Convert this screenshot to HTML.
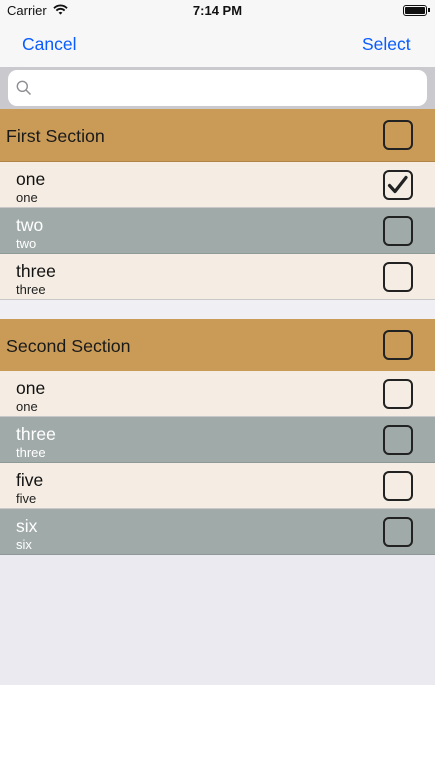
<!DOCTYPE html>
<html><head><meta charset="utf-8"><style>
*{margin:0;padding:0;box-sizing:border-box}
body{width:435px;height:773px;background:#fff;font-family:"Liberation Sans",sans-serif;position:relative;overflow:hidden}
.abs{position:absolute}
.bar{left:0;top:0;width:435px;height:67px;background:#f7f7f7}
.search{left:0;top:67px;width:435px;height:42px;background:#c9c9ce}
.field{left:8px;top:70px;width:419px;height:36px;background:#fff;border-radius:9px}
.hdr{left:0;width:435px;height:53px;background:#c99b57;border-bottom:1px solid #b08447}
.hdr span{position:absolute;left:6px;top:17px;font-size:17.8px;color:#1a1a1a}
.row{left:0;width:435px;height:46px;border-bottom:1px solid #c8c8c8}
.cream{background:#f5ede3}
.grey{background:#a0aaa8;border-bottom-color:#8e9896}
.row .t{position:absolute;left:16px;top:7px;font-size:17.5px;color:#111}
.row .s{position:absolute;left:16px;top:28px;font-size:13px;color:#222}
.grey .t,.grey .s{color:#fff}
.cb{position:absolute;left:383px;width:30px;height:30px;border:2px solid #222;border-radius:6px}
.row .cb{top:8px}
.hdr .cb{top:11px}
</style></head><body>
<div class="abs bar"></div>
<div class="abs" style="left:7px;top:3px;font-size:13px;color:#111">Carrier</div>
<svg class="abs" style="left:53px;top:4px" width="15" height="11" viewBox="0 0 15 11"><path d="M1 4.2a9 9 0 0 1 13 0" stroke="#111" stroke-width="1.8" fill="none"/><path d="M3.4 6.6a5.6 5.6 0 0 1 8.2 0" stroke="#111" stroke-width="1.8" fill="none"/><path d="M5.6 8.6L7.5 10.6 9.4 8.6a2.7 2.7 0 0 0-3.8 0z" fill="#111"/></svg>
<div class="abs" style="left:0;width:435px;top:3px;text-align:center;font-size:13px;font-weight:bold;color:#111">7:14 PM</div>
<div class="abs" style="left:403px;top:5px;width:24px;height:11px;border:1px solid #111;border-radius:3px;padding:1px"><div style="width:100%;height:100%;background:#111;border-radius:1px"></div></div>
<div class="abs" style="left:428px;top:8px;width:1.5px;height:4px;background:#111"></div>
<div class="abs" style="left:22px;top:34px;font-size:17.5px;color:#0a5cff">Cancel</div>
<div class="abs" style="left:362px;top:34px;font-size:17.5px;color:#0a5cff">Select</div>
<div class="abs search"></div>
<div class="abs field"></div>
<svg class="abs" style="left:16px;top:80px" width="16" height="16" viewBox="0 0 16 16"><circle cx="6.3" cy="6.3" r="5" stroke="#8e8e93" stroke-width="1.4" fill="none"/><path d="M10 10l4.5 4.5" stroke="#8e8e93" stroke-width="1.5"/></svg>

<div class="abs hdr" style="top:109px"><span>First Section</span><div class="cb"></div></div>
<div class="abs row cream" style="top:162px"><div class="t">one</div><div class="s">one</div><div class="cb"><svg width="26" height="26" viewBox="0 0 26 26" style="position:absolute;left:0;top:0"><path d="M4.5 13.5l5.5 6 11-14" stroke="#222" stroke-width="3.2" fill="none" stroke-linecap="round" stroke-linejoin="round"/></svg></div></div>
<div class="abs row grey" style="top:208px"><div class="t">two</div><div class="s">two</div><div class="cb"></div></div>
<div class="abs row cream" style="top:254px"><div class="t">three</div><div class="s">three</div><div class="cb"></div></div>
<div class="abs" style="left:0;top:300px;width:435px;height:19px;background:#efeff4"></div>
<div class="abs hdr" style="top:319px"><span>Second Section</span><div class="cb"></div></div>
<div class="abs row cream" style="top:371px"><div class="t">one</div><div class="s">one</div><div class="cb"></div></div>
<div class="abs row grey" style="top:417px"><div class="t">three</div><div class="s">three</div><div class="cb"></div></div>
<div class="abs row cream" style="top:463px"><div class="t">five</div><div class="s">five</div><div class="cb"></div></div>
<div class="abs row grey" style="top:509px"><div class="t">six</div><div class="s">six</div><div class="cb"></div></div>
<div class="abs" style="left:0;top:555px;width:435px;height:130px;background:#ebeaf1"></div>
</body></html>
